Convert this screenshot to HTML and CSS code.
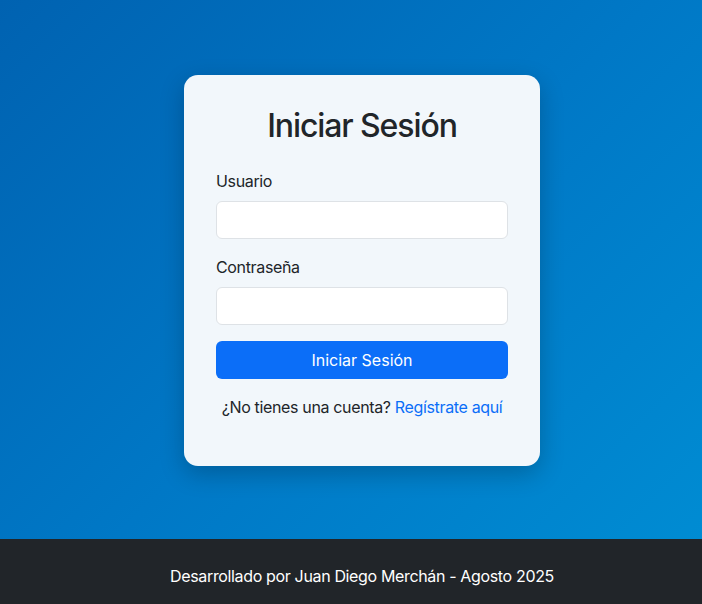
FILE: index.html
```html
<!DOCTYPE html>
<html lang="es">
<head>
<meta charset="utf-8">
<title>Iniciar Sesión</title>
<link rel="stylesheet" href="styles.css">
</head>
<body>
<main class="main">
  <div class="card">
    <h2 class="title">Iniciar Sesión</h2>
    <form class="form">
      <div class="field">
        <label class="label" for="user">Usuario</label>
        <input class="input" id="user" type="text">
      </div>
      <div class="field">
        <label class="label" for="pass">Contraseña</label>
        <input class="input" id="pass" type="password">
      </div>
      <button class="btn" type="button">Iniciar Sesión</button>
    </form>
    <p class="register">¿No tienes una cuenta? <a class="link" href="#">Regístrate aquí</a></p>
  </div>
</main>
<footer class="footer">
  <p class="footer-text">Desarrollado por Juan Diego Merchán - Agosto 2025</p>
</footer>
</body>
</html>
```
FILE: styles.css
```css
* { box-sizing: border-box; }
html, body { height: 100%; }
body {
  margin: 0;
  font-family: Inter, "Noto Sans", "Liberation Sans", sans-serif;
  font-size: 16px;
  line-height: 24px;
  letter-spacing: -0.35px;
  color: #212529;
  display: flex;
  flex-direction: column;
  min-height: 100vh;
  background: linear-gradient(135deg, #0062b1 0%, #0078c6 50%, #008ed4 100%);
}
.main {
  flex: 1;
  display: flex;
  align-items: center;
  justify-content: center;
  padding-left: 22px;
  padding-top: 2px;
}
.card {
  width: 356px;
  background: #f2f7fb;
  border-radius: 14px;
  padding: 32px 32px 32px;
  box-shadow: 0 8px 24px rgba(0, 0, 0, 0.22);
}
.title {
  margin: 0 0 24px;
  text-align: center;
  font-size: 32px;
  line-height: 38px;
  font-weight: 500;
  letter-spacing: -1.1px;
}
.form { display: flex; flex-direction: column; }
.field { margin-bottom: 16px; display: flex; flex-direction: column; }
.label { margin-bottom: 8px; }
.input {
  height: 38px;
  border: 1px solid #dee2e6;
  border-radius: 6px;
  background: #fff;
  font: inherit;
  padding: 6px 12px;
}
.btn {
  height: 38px;
  border: none;
  border-radius: 6px;
  background: #0b6ef8;
  color: #fff;
  font: inherit;
  cursor: pointer;
}
.register {
  margin: 16px 0 15px;
  text-align: center;
  white-space: nowrap;
}
.link { color: #0b6ef8; text-decoration: none; }
.footer {
  height: 65px;
  flex: 0 0 65px;
  background: #212529;
  color: #fff;
  padding-top: 25px;
  padding-left: 22px;
  text-align: center;
}
.footer-text { margin: 0; }
```
